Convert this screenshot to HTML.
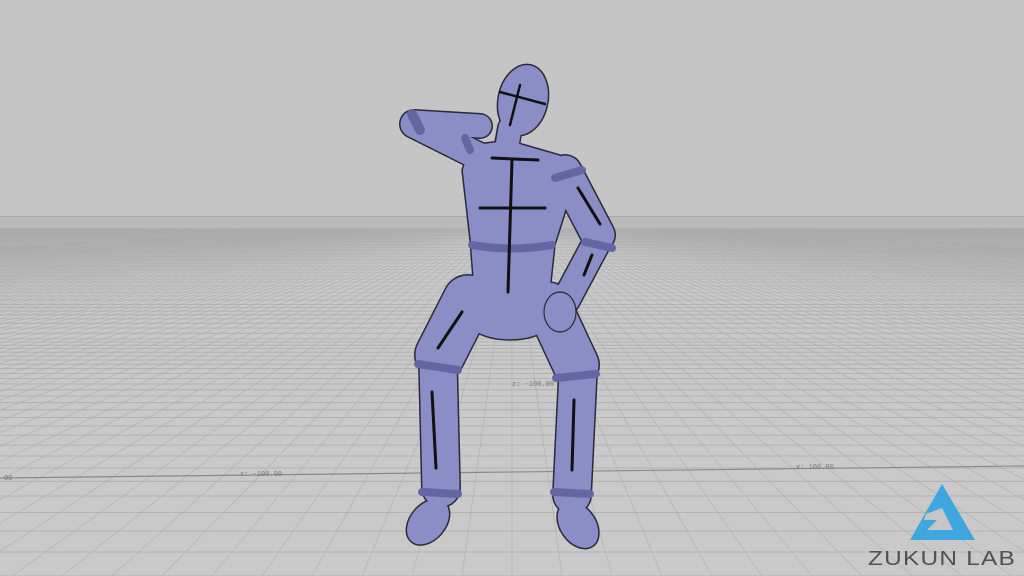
<!DOCTYPE html>
<html><head><meta charset="utf-8"><style>
html,body{margin:0;padding:0;width:1024px;height:576px;overflow:hidden;background:#c4c4c4}
svg{display:block}
</style></head><body>
<svg id="s" width="1024" height="576" viewBox="0 0 1024 576" xmlns="http://www.w3.org/2000/svg" style="position:absolute;left:0;top:0">
<rect width="1024" height="216" fill="#c5c5c5"/>
<rect y="216" width="1024" height="360" fill="#c9c9c9"/>
<rect y="217" width="1024" height="12" fill="#bababa"/>
<line x1="0" y1="216.5" x2="1024" y2="216.5" stroke="#a8a8a8" stroke-width="1"/>
<g id="grid" stroke="#acacac" stroke-width="0.8" fill="none"></g>
<g stroke="#8a8a8a" stroke-width="1.2">
<line x1="0" y1="478" x2="1024" y2="466"/>
</g>
<g font-family="Liberation Mono, monospace" font-size="7" fill="#777">
<text x="240" y="476">x: -100.00</text>
<text x="796" y="469">x: 100.00</text>
<text x="512" y="386">z: -100.00</text>
<text x="4" y="480">00</text>
</g>
<g stroke-linecap="round" stroke-linejoin="round">
<g stroke="#2a2a3a" fill="none">
<path d="M468 300 L440 355" stroke-width="52"/>
<path d="M438 362 L441 488" stroke-width="40"/>
<path d="M548 305 L576 365" stroke-width="48"/>
<path d="M578 372 L572 495" stroke-width="40"/>
<path d="M565 172 L598 235" stroke-width="36"/>
<path d="M597 242 L566 300" stroke-width="30"/>
<path d="M482 158 L414 124" stroke-width="30"/>
<path d="M414 122 L480 126" stroke-width="26"/>
<path d="M510 128 L506 150" stroke-width="26"/>
</g>
<g fill="#8b8dc6" stroke="#2a2a3a" stroke-width="1.5">
<ellipse cx="428" cy="522" rx="18" ry="26" transform="rotate(40 428 522)"/>
<ellipse cx="578" cy="525" rx="18" ry="26" transform="rotate(-35 578 525)"/>
<ellipse cx="510" cy="308" rx="52" ry="32"/>
<polygon points="470,145 508,140 560,155 574,185 555,245 550,292 474,292 470,240 462,170"/>
<ellipse cx="523" cy="100" rx="25" ry="36" transform="rotate(12 523 100)"/>
</g>
<g stroke="#8b8dc6" fill="none">
<path d="M468 300 L440 355" stroke-width="49"/>
<path d="M438 362 L441 488" stroke-width="37"/>
<path d="M548 305 L576 365" stroke-width="45"/>
<path d="M578 372 L572 495" stroke-width="37"/>
<path d="M565 172 L598 235" stroke-width="33"/>
<path d="M597 242 L566 300" stroke-width="27"/>
<path d="M482 158 L414 124" stroke-width="27"/>
<path d="M414 122 L480 126" stroke-width="23"/>
<path d="M510 128 L506 152" stroke-width="23"/>
</g>
<ellipse cx="510" cy="300" rx="50" ry="10" fill="#8b8dc6"/>
<ellipse cx="560" cy="312" rx="16" ry="20" fill="#8b8dc6" stroke="#2a2a3a" stroke-width="1.2"/>
<g stroke="#6466a3" fill="none" stroke-width="8">
<path d="M472 245 Q512 252 552 245"/>
<path d="M418 364 L458 370"/>
<path d="M556 378 L596 374"/>
<path d="M422 492 L458 494"/>
<path d="M554 492 L590 494"/>
<path d="M555 178 L582 170"/>
<path d="M585 242 L612 248"/>
<path d="M412 114 L420 130" stroke-width="10"/>
<path d="M465 138 L470 150"/>
</g>
<g stroke="#111" fill="none" stroke-width="3">
<path d="M480 208 L545 208"/>
<path d="M492 158 L538 160"/>
<path d="M512 160 L508 292"/>
<path d="M500 92 L545 104" stroke-width="2.5"/>
<path d="M520 85 L510 125" stroke-width="2.5"/>
<path d="M462 312 L438 348"/>
<path d="M432 392 L436 468"/>
<path d="M574 400 L572 470"/>
<path d="M578 188 L600 224"/>
<path d="M592 255 L584 275"/>
</g>
</g>
<polygon points="942,484 975,540 910,540" fill="#3fa6df"/>
<polygon points="942,508 953,530 927,530 937,520 924,520 926,514" fill="#c6c6c6"/>
<text x="868" y="565" font-family="Liberation Sans, sans-serif" font-size="20" fill="#505055" letter-spacing="1" textLength="148" lengthAdjust="spacingAndGlyphs">ZUKUN LAB</text>
</svg>
<script>
(function(){
var g=document.getElementById('grid'),ns='http://www.w3.org/2000/svg';
var f=700,H=7.2,cx=512,hy=216;
function L(a,b,c,d,op){var l=document.createElementNS(ns,'line');l.setAttribute('x1',a.toFixed(1));l.setAttribute('y1',b.toFixed(1));l.setAttribute('x2',c.toFixed(1));l.setAttribute('y2',d.toFixed(1));if(op)l.setAttribute('stroke-opacity',op);g.appendChild(l);}
var zmax=400,lastY=1e9;
for(var z=13;z<=zmax;z++){var y=hy+f*H/z;if(lastY-y<3)continue;lastY=y;L(0,y,1024,y,z>60?0.5:null);}
for(var x=-300;x<=300;x++){var zs=Math.max(13,Math.abs(x)*700/600);L(cx+f*x/zs,hy+f*H/zs,cx+f*x/zmax,hy+f*H/zmax,Math.abs(x)>120?0.4:0.7);}
})();
</script>
</body></html>
